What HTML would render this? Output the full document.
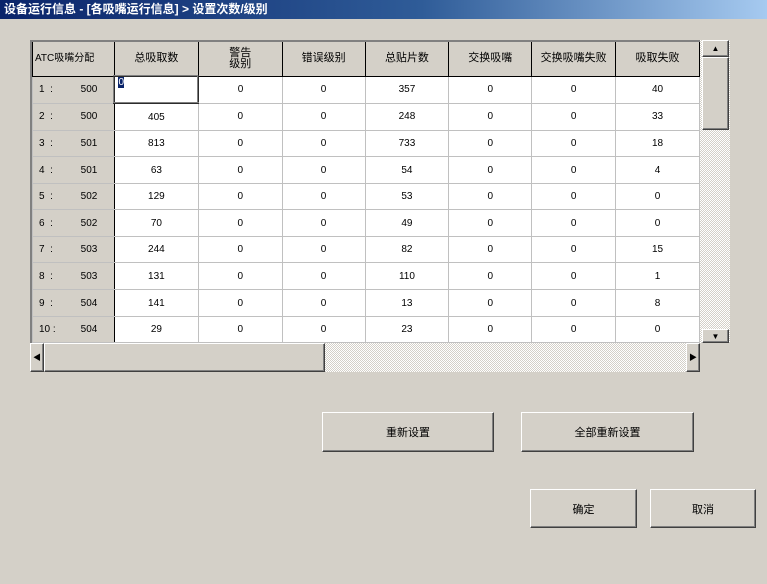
<!DOCTYPE html><html><head><meta charset="utf-8"><style>
body{margin:0;width:767px;height:584px;background:#d4d0c8;font-family:"Liberation Sans","Noto Sans CJK SC",sans-serif;font-size:11px;position:relative;overflow:hidden;color:#000}
.title{position:absolute;left:0;top:0;width:767px;height:19px;background:linear-gradient(90deg,#0a246a,#2f5c98 55%,#a6caf0);color:#fff;font-weight:bold;font-size:12px;line-height:19px;padding-left:4px;box-sizing:border-box}
.grid{position:absolute;left:30px;top:40px;width:670px;height:303px;background:#fff;border-left:2px solid #808080;border-top:2px solid #808080;box-sizing:border-box;overflow:hidden}
table{border-collapse:collapse;table-layout:fixed;position:absolute;left:0;top:0}
td{border:1px solid #c0c0c0;text-align:center;height:25px;padding:0;font-size:10px}
tr.o td{height:26px}
th{background:#d4d0c8;border:1px solid #000;border-top:none;font-weight:normal;height:33px;padding:0;font-size:11px;line-height:11px}
td.h{background:#d4d0c8;border-right:1px solid #000;text-align:left;padding-left:6px;white-space:pre}
.vs{position:absolute;left:700px;top:40px;width:30px;height:303px;background:repeating-conic-gradient(#d4d0c8 0 25%,#fff 0 50%) 0 0/2px 2px}
.hs{position:absolute;left:30px;top:343px;width:670px;height:29px;background:repeating-conic-gradient(#d4d0c8 0 25%,#fff 0 50%) 0 0/2px 2px}
.b3{position:absolute;background:#d4d0c8;border-top:1px solid #fff;border-left:1px solid #fff;border-right:1px solid #404040;border-bottom:1px solid #404040;box-sizing:border-box;box-shadow:inset -1px -1px #808080}
.btn{display:flex;align-items:center;justify-content:center;font-size:11px}
.corner{position:absolute;left:700px;top:343px;width:30px;height:29px;background:#d4d0c8}
</style></head><body>
<div class="title">设备运行信息 - [各吸嘴运行信息] &gt; 设置次数/级别</div>
<div class="grid"><table>
<colgroup><col style="width:82px"><col style="width:84px"><col style="width:84px"><col style="width:83px"><col style="width:84px"><col style="width:83px"><col style="width:84px"><col style="width:84px"></colgroup>
<tr><th style="text-align:left;padding-left:2px;font-size:10px">ATC吸嘴分配</th><th>总吸取数</th><th>警告<br>级别</th><th>错误级别</th><th>总贴片数</th><th>交换吸嘴</th><th>交换吸嘴失败</th><th>吸取失败</th></tr>
<tr><td class="h">1  :          500</td><td style="text-align:left;border:2px inset #808080;vertical-align:top"><span style="background:#0a246a;color:#fff;margin-left:3px">0</span></td><td>0</td><td>0</td><td>357</td><td>0</td><td>0</td><td>40</td></tr>
<tr class="o"><td class="h">2  :          500</td><td>405</td><td>0</td><td>0</td><td>248</td><td>0</td><td>0</td><td>33</td></tr>
<tr><td class="h">3  :          501</td><td>813</td><td>0</td><td>0</td><td>733</td><td>0</td><td>0</td><td>18</td></tr>
<tr class="o"><td class="h">4  :          501</td><td>63</td><td>0</td><td>0</td><td>54</td><td>0</td><td>0</td><td>4</td></tr>
<tr><td class="h">5  :          502</td><td>129</td><td>0</td><td>0</td><td>53</td><td>0</td><td>0</td><td>0</td></tr>
<tr class="o"><td class="h">6  :          502</td><td>70</td><td>0</td><td>0</td><td>49</td><td>0</td><td>0</td><td>0</td></tr>
<tr><td class="h">7  :          503</td><td>244</td><td>0</td><td>0</td><td>82</td><td>0</td><td>0</td><td>15</td></tr>
<tr class="o"><td class="h">8  :          503</td><td>131</td><td>0</td><td>0</td><td>110</td><td>0</td><td>0</td><td>1</td></tr>
<tr class="o"><td class="h">9  :          504</td><td>141</td><td>0</td><td>0</td><td>13</td><td>0</td><td>0</td><td>8</td></tr>
<tr><td class="h">10 :         504</td><td>29</td><td>0</td><td>0</td><td>23</td><td>0</td><td>0</td><td>0</td></tr>
<tr><td class="h"></td><td></td><td></td><td></td><td></td><td></td><td></td><td></td></tr>
</table></div>
<div class="vs"></div>
<div class="b3 btn" style="left:702px;top:40px;width:27px;height:17px;font-size:8px">▲</div>
<div class="b3" style="left:702px;top:57px;width:27px;height:73px"></div>
<div class="b3 btn" style="left:702px;top:329px;width:27px;height:14px;font-size:8px">▼</div>
<div class="hs"></div>
<div class="b3 btn" style="left:30px;top:343px;width:14px;height:29px;font-size:8px">◀</div>
<div class="b3" style="left:44px;top:343px;width:281px;height:29px"></div>
<div class="b3 btn" style="left:686px;top:343px;width:14px;height:29px;font-size:8px">▶</div>
<div class="corner"></div>
<div class="b3 btn" style="left:322px;top:412px;width:172px;height:40px">重新设置</div>
<div class="b3 btn" style="left:521px;top:412px;width:173px;height:40px">全部重新设置</div>
<div class="b3 btn" style="left:530px;top:489px;width:107px;height:39px">确定</div>
<div class="b3 btn" style="left:650px;top:489px;width:106px;height:39px">取消</div>
</body></html>
